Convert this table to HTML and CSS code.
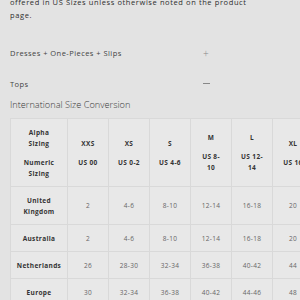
FILE: index.html
```html
<!DOCTYPE html>
<html>
<head>
<meta charset="utf-8">
<link rel="stylesheet" href="styles.css">
</head>
<body>
<div class="page">
  <p class="intro">offered in US Sizes unless otherwise noted on the product<br>page.</p>
  <div class="acc-row first"><span>Dresses + One-Pieces + Slips</span><span class="sign">+</span></div>
  <div class="acc-row"><span>Tops</span><span class="sign minus"></span></div>
  <h2 class="title">International Size Conversion</h2>
  <table class="sizes">
    <colgroup><col class="c-first"><col class="c"><col class="c"><col class="c"><col class="c"><col class="c"><col class="c"></colgroup>
    <tr class="head">
      <th><div class="blk">Alpha<br>Sizing</div><div class="blk">Numeric<br>Sizing</div></th>
      <td><div class="blk">XXS</div><div class="blk">US 00</div></td>
      <td><div class="blk">XS</div><div class="blk">US 0-2</div></td>
      <td><div class="blk">S</div><div class="blk">US 4-6</div></td>
      <td><div class="blk">M</div><div class="blk">US 8-<br>10</div></td>
      <td><div class="blk">L</div><div class="blk">US 12-<br>14</div></td>
      <td><div class="blk">XL</div><div class="blk">US 16</div></td>
    </tr>
    <tr>
      <th>United<br>Kingdom</th><td>2</td><td>4-6</td><td>8-10</td><td>12-14</td><td>16-18</td><td>20</td>
    </tr>
    <tr>
      <th>Australia</th><td>2</td><td>4-6</td><td>8-10</td><td>12-14</td><td>16-18</td><td>20</td>
    </tr>
    <tr>
      <th>Netherlands</th><td>26</td><td>28-30</td><td>32-34</td><td>36-38</td><td>40-42</td><td>44</td>
    </tr>
    <tr>
      <th>Europe</th><td>30</td><td>32-34</td><td>36-38</td><td>40-42</td><td>44-46</td><td>48</td>
    </tr>
  </table>
</div>
</body>
</html>
```
FILE: styles.css
```css
html, body {
  margin: 0;
  padding: 0;
  background: #e3e3e3;
  overflow: hidden;
}
.page {
  padding: 0 0 0 10px;
  width: 400px;
  font-family: "Open Sans", "Liberation Sans", sans-serif;
  color: #333;
}
.intro {
  margin: -4px 0 0 0;
  font-size: 7.5px;
  line-height: 13px;
  letter-spacing: 0.6px;
  color: #2e2e2e;
}
.acc-row {
  width: 200px;
  display: flex;
  justify-content: space-between;
  align-items: center;
  font-size: 7.5px;
  letter-spacing: 0.45px;
  color: #444;
  height: 31px;
}
.acc-row.first { margin-top: 15px; }
.sign {
  font-size: 10px;
  color: #888;
  font-weight: 300;
  width: 8px;
  text-align: center;
}
.minus {
  display: block;
  width: 7px;
  height: 1px;
  background: #888;
}
.title {
  margin: -1px 0 6px 0;
  font-size: 9.2px;
  font-weight: 300;
  line-height: 14px;
  color: #3a3a3a;
  letter-spacing: 0;
}
.sizes {
  border-collapse: collapse;
  table-layout: fixed;
  width: 303px;
  font-size: 6.5px;
  line-height: 11px;
  letter-spacing: 0.35px;
}
.c-first { width: 57px; }
.c { width: 41px; }
.sizes th, .sizes td {
  border: 1px solid #d9d9d9;
  background: #e8e8e8;
  text-align: center;
  vertical-align: middle;
  padding: 7.5px 2px;
}
.sizes th {
  font-weight: 700;
  color: #333;
}
.sizes td {
  color: #666;
}
.head td {
  font-weight: 700;
  color: #333;
}
.blk + .blk { margin-top: 8px; }
```
